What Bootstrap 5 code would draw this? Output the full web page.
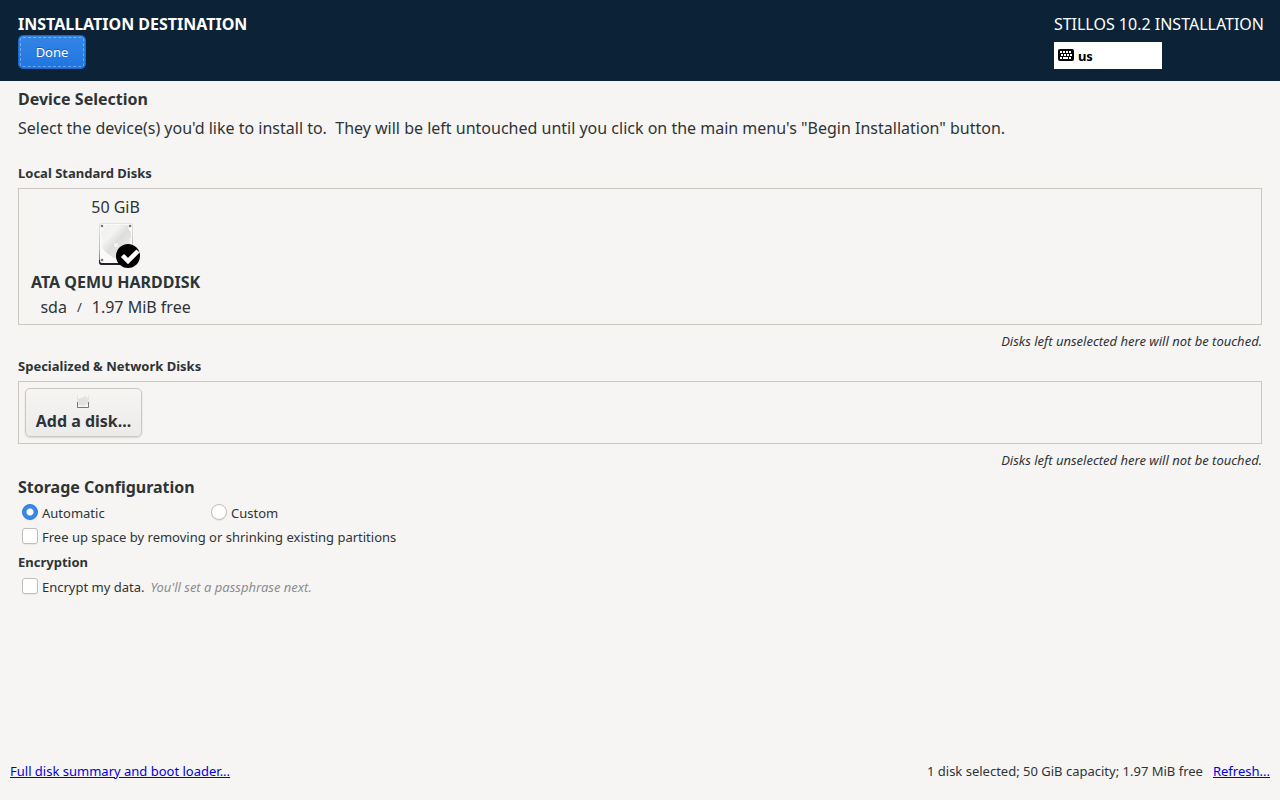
<!DOCTYPE html>
<html lang="en">
<head>
<meta charset="utf-8">
<meta name="viewport" content="width=device-width, initial-scale=1">
<title>Installation Destination</title>
<link href="https://cdn.jsdelivr.net/npm/bootstrap@5.3.0/dist/css/bootstrap.min.css" rel="stylesheet">
<style>
  body { font-family: "Noto Sans", sans-serif; font-size: 13px; line-height: 18px; color: #2e3436; background: #f6f5f4; }
  .text-lg { font-size: 16px; line-height: 22px; }
  .section-label { font-size: 13px; line-height: 18px; font-weight: 700; margin: 0; }
  .topbar { background: #0c2337; color: #fff; padding: 13px 16px 12px 18px; }
  .btn-done { width: 68px; height: 34px; padding: 1px 0 0; font-size: 13px; color: #fff; border: 1px solid #1b6acb; border-radius: 5px; background: linear-gradient(#3584e4, #1f76e1); outline: 1px dashed rgba(255,255,255,.35); outline-offset: -3px; text-shadow: 0 -1px rgba(0,0,0,.3); }
  .btn-done:hover { color: #fff; background: #3584e4; }
  .layout-box { width: 108px; height: 27px; margin-top: 7px; padding: 0 4px; gap: 4px; background: #fff; color: #000; border: 0; font-weight: 700; }
  main { padding: 7px 18px 0; }
  .intro { margin: 7px 0 25px; }
  .disk-frame { border: 1px solid #cdc7c2; margin: 6px 0 7px; }
  .disk-list { padding: 7px 12px 6px; }
  .disk { background: none; border: 0; padding: 0; color: inherit; }
  .disk svg { margin: 2px 0 3px; }
  .disk-info { margin-top: 3px; gap: 10px; }
  .disk-note { font-style: italic; text-align: right; margin: 0 0 7px; }
  .btn-add { width: 117px; height: 49px; margin: 6px; padding: 0; color: #2e3436; border: 1px solid #cdc7c2; border-radius: 5px; background: linear-gradient(#f6f5f4, #edebe9); box-shadow: 0 1px 2px rgba(0,0,0,.12); }
  .config-title { margin: 0 0 3px; }
  .encryption-label { margin: 4px 0; }
  .option { min-height: 24px; padding-left: 4px; gap: 4px; }
  .option .form-check-input { width: 16px; height: 16px; margin: 0 0 2px; border-color: #c4bdb5; background-color: #fff; box-shadow: 0 1px 1px rgba(0,0,0,.06); }
  .option .form-check-input[type=checkbox] { border-radius: 3px; }
  .option .form-check-input[type=radio]:checked { background-color: #3b87e6; border-color: #2f7fe0; background-image: radial-gradient(circle, #fff 3px, #3b87e6 4px); }
  .option-first { width: 189px; }
  .hint { color: #8b8e8f; margin-left: 2px; }
  footer { padding: 0 10px 20px; }
  footer a, footer a:hover { color: #0000e0; }
  .status { gap: 10px; }
</style>
</head>
<body class="d-flex flex-column min-vh-100">
<header class="topbar d-flex justify-content-between align-items-start">
  <div>
    <h1 class="text-lg fw-bold m-0">INSTALLATION DESTINATION</h1>
    <button type="button" class="btn btn-done d-block">Done</button>
  </div>
  <div>
    <div class="text-lg">STILLOS 10.2 INSTALLATION</div>
    <button type="button" class="layout-box d-flex align-items-center" aria-label="Keyboard layout us">
      <svg width="16" height="16" viewBox="0 0 16 16" aria-hidden="true">
        <rect y="1" width="16" height="12" rx="2"/>
        <path fill="#fff" d="M2 3h2v2H2zM5 3h2v2H5zM8 3h2v2H8zM11 3h2v2h-2zM3 6h2v2H3zM6 6h2v2H6zM9 6h2v2H9zM12 6h2v2h-2zM2 9h2v2H2zM5 9h5v2H5zM11 9h2v2h-2z"/>
      </svg>
      <span>us</span>
    </button>
  </div>
</header>

<main class="flex-grow-1">
  <h2 class="text-lg fw-bold m-0">Device Selection</h2>
  <p class="text-lg intro">Select the device(s) you'd like to install to.&nbsp; They will be left untouched until you click on the main menu's "Begin Installation" button.</p>

  <h3 class="section-label">Local Standard Disks</h3>
  <div class="disk-frame disk-list d-flex">
    <button type="button" class="disk text-lg d-flex flex-column align-items-center" aria-pressed="true">
      <span>50 GiB</span>
      <svg width="48" height="48" viewBox="0 0 48 48" aria-hidden="true">
        <defs>
          <linearGradient id="platter" x1="0" y1="0" x2="1" y2="1">
            <stop offset="0" stop-color="#efefed"/><stop offset=".3" stop-color="#f4f4f3"/><stop offset=".5" stop-color="#dededb"/><stop offset="1" stop-color="#efefee"/>
          </linearGradient>
          <linearGradient id="edge" x1="0" y1="0" x2="0" y2="1">
            <stop offset="0" stop-color="#e4e3e0"/><stop offset=".6" stop-color="#c0bfbc"/><stop offset="1" stop-color="#5e5c64"/>
          </linearGradient>
        </defs>
        <rect x="7" y="3" width="34" height="42" rx="3" fill="url(#edge)"/>
        <path d="M7 40h34v2q0 3-3 3H10q-3 0-3-3z" fill="#241f31"/>
        <rect x="8" y="4" width="32" height="39" rx="2" fill="#fafafa"/>
        <path d="M13 5h23q0 5 3 7v6q-2 2-1 5 0 16-14 16S9 32 9 23q3-3 0-6v-6q4-2 4-6z" fill="url(#platter)"/>
        <circle cx="24" cy="25" r="2" fill="#f6f5f4"/>
        <g fill="#77767b"><circle cx="10" cy="6" r="1.3"/><circle cx="38" cy="6" r="1.3"/><circle cx="10" cy="40" r="1.3"/></g>
        <circle cx="36" cy="36" r="12"/>
        <path d="M30.500 35.500l5.500 5.500L46 31" fill="none" stroke="#fff" stroke-width="4.500"/>
      </svg>
      <span class="fw-bold">ATA QEMU HARDDISK</span>
      <span class="disk-info d-flex"><span>sda</span><small class="section-label fw-normal align-self-center">/</small><span>1.97 MiB free</span></span>
    </button>
  </div>
  <p class="disk-note">Disks left unselected here will not be touched.</p>

  <h3 class="section-label">Specialized &amp; Network Disks</h3>
  <div class="disk-frame">
    <button type="button" class="btn btn-add text-lg fw-bold d-flex flex-column align-items-center justify-content-center">
      <svg width="16" height="16" viewBox="0 0 16 16" aria-hidden="true">
        <path d="M1 1h12v13H1z" fill="#e6e5e2"/>
        <path d="M1.500 8v5.500h11V8" fill="none" stroke="#77767b"/>
        <path d="M2 1h10v12H2z" fill="#f6f6f5"/>
        <path d="M2 5l8-3 2 3v4l-4 3-6-1z" fill="#e2e2df"/>
      </svg>
      <span>Add a disk...</span>
    </button>
  </div>
  <p class="disk-note">Disks left unselected here will not be touched.</p>

  <h2 class="text-lg fw-bold config-title">Storage Configuration</h2>
  <div class="d-flex">
    <div class="option option-first d-flex align-items-center">
      <input class="form-check-input" type="radio" name="mode" id="auto" checked><label for="auto">Automatic</label>
    </div>
    <div class="option d-flex align-items-center">
      <input class="form-check-input" type="radio" name="mode" id="custom"><label for="custom">Custom</label>
    </div>
  </div>
  <div class="option d-flex align-items-center">
    <input class="form-check-input" type="checkbox" id="reclaim"><label for="reclaim">Free up space by removing or shrinking existing partitions</label>
  </div>
  <h3 class="section-label encryption-label">Encryption</h3>
  <div class="option d-flex align-items-center">
    <input class="form-check-input" type="checkbox" id="encrypt"><label for="encrypt">Encrypt my data.</label>
    <span class="hint fst-italic">You'll set a passphrase next.</span>
  </div>
</main>

<footer class="d-flex justify-content-between">
  <a href="#summary">Full disk summary and boot loader...</a>
  <div class="status d-flex"><span>1 disk selected; 50 GiB capacity; 1.97 MiB free</span><a href="#refresh">Refresh...</a></div>
</footer>
<script src="https://cdn.jsdelivr.net/npm/bootstrap@5.3.0/dist/js/bootstrap.bundle.min.js"></script>
</body>
</html>
